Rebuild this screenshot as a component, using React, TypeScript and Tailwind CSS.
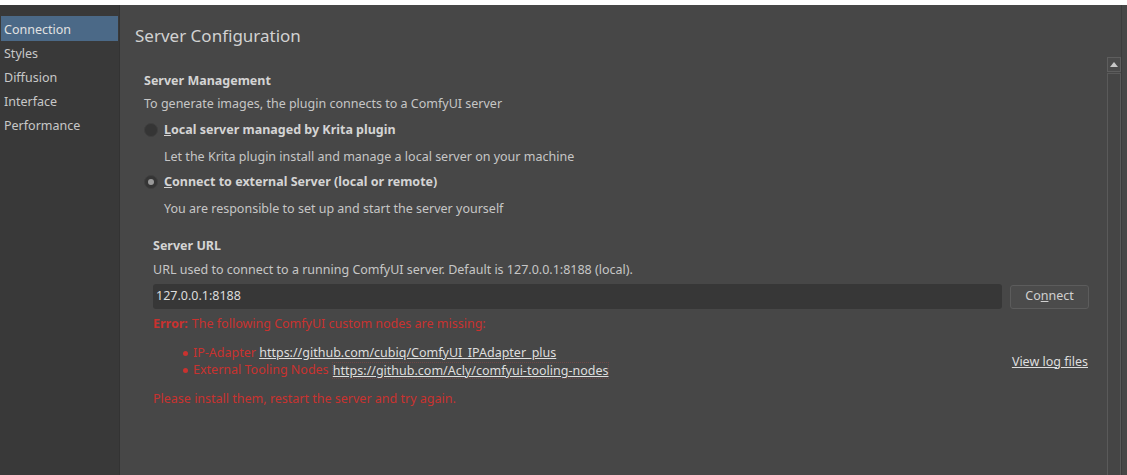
import React from "react";

const navItems = ["Connection", "Styles", "Diffusion", "Interface", "Performance"];

function Radio({ checked }: { checked: boolean }) {
  return (
    <span className="w-[14px] h-[14px] rounded-full bg-[#353535] border border-[#3f3f3f] flex items-center justify-center shrink-0">
      {checked && <span className="w-[6px] h-[6px] rounded-full bg-[#9a9a9a]" />}
    </span>
  );
}

function Bullet() {
  return <span className="w-[5px] h-[5px] rounded-full bg-[#c9322f] mr-[5px] shrink-0" />;
}

export default function App() {
  return (
    <div
      className="w-full h-[475px] flex flex-col bg-white overflow-hidden text-[12.5px] text-[#c6c6c6]"
      style={{ fontFamily: '"Noto Sans", "Open Sans", sans-serif' }}
    >
      <div className="h-[5px] bg-white shrink-0" />
      <div className="flex flex-1 min-h-0">
        {/* ---------------- SIDEBAR ---------------- */}
        <div className="w-[120px] shrink-0 bg-[#393939] pt-[11px] px-px border-r border-[#333]">
          {navItems.map((item, i) => (
            <div
              key={item}
              className={`flex items-center px-[3px] ${
                i === 0
                  ? "h-[25px] pt-[3px] bg-[#4b6987] text-[#e2e2e2]"
                  : "h-6 pt-[3px] text-[#c8c8c8]"
              }`}
            >
              {item}
            </div>
          ))}
        </div>

        {/* ---------------- MAIN ---------------- */}
        <div className="flex-1 flex bg-[#474747] min-w-0">
          <div className="flex-1 pl-[15px] pr-[18px] pt-[21px] min-w-0">
            <div className="h-5 flex items-center text-[17px] text-[#d2d2d2]">
              Server Configuration
            </div>

            <div className="pl-[9px]">
              <div className="mt-[25px] h-5 flex items-center font-bold text-[#d4d4d4]">
                Server Management
              </div>
              <div className="mt-[3px] h-5 flex items-center">
                To generate images, the plugin connects to a ComfyUI server
              </div>
              <div className="mt-[6px] h-5 flex items-center gap-[6px] font-bold text-[#d4d4d4]">
                <Radio checked={false} />
                <span>
                  <span className="underline">L</span>ocal server managed by Krita plugin
                </span>
              </div>
              <div className="mt-[7px] h-5 flex items-center pl-5">
                Let the Krita plugin install and manage a local server on your machine
              </div>
              <div className="mt-[5px] h-5 flex items-center gap-[6px] font-bold text-[#d4d4d4]">
                <Radio checked={true} />
                <span>
                  <span className="underline">C</span>onnect to external Server (local or remote)
                </span>
              </div>
              <div className="mt-[7px] h-5 flex items-center pl-5">
                You are responsible to set up and start the server yourself
              </div>

              <div className="pl-[9px]">
                <div className="mt-[17px] h-5 flex items-center font-bold text-[#d4d4d4]">
                  Server URL
                </div>
                <div className="mt-1 h-5 flex items-center">
                  URL used to connect to a running ComfyUI server. Default is 127.0.0.1:8188 (local).
                </div>
                <div className="mt-1 flex gap-2 items-center">
                  <div className="flex-1 h-[25px] bg-[#373737] rounded-[3px] flex items-center px-[3px] text-[#dcdcdc]">
                    127.0.0.1:8188
                  </div>
                  <button className="w-[79px] h-[24px] bg-[#4b4b4b] border border-[#5c5c5c] rounded-[3px] text-[#d0d0d0] flex items-center justify-center">
                    <span>
                      Co<span className="underline">n</span>nect
                    </span>
                  </button>
                </div>

                <div className="mt-[5px] h-5 flex items-center text-[#c9322f]">
                  <span className="font-bold mr-1">Error:</span>
                  The following ComfyUI custom nodes are missing:
                </div>

                <div className="mt-[11px] flex items-center justify-between">
                  <div className="pl-[30px]">
                    <div className="h-[17px] flex items-center text-[#c9322f]">
                      <Bullet />
                      IP-Adapter&nbsp;
                      <span className="text-[#dedede] underline">
                        https://github.com/cubiq/ComfyUI_IPAdapter_plus
                      </span>
                    </div>
                    <div className="h-[17px] flex items-center text-[#c9322f]">
                      <Bullet />
                      External Tooling Nodes&nbsp;
                      <span className="text-[#dedede] underline border border-dotted border-[#6e4646] leading-[15px]">
                        https://github.com/Acly/comfyui-tooling-nodes
                      </span>
                    </div>
                  </div>
                  <span className="text-[#dedede] underline mr-px">View log files</span>
                </div>

                <div className="mt-[10px] h-5 flex items-center text-[#c9322f]">
                  Please install them, restart the server and try again.
                </div>
              </div>
            </div>
          </div>

          {/* ---------------- SCROLLBAR ---------------- */}
          <div className="w-[14px] shrink-0 pt-[52px] flex flex-col">
            <div className="h-[15px] border border-[#5e5e5e] bg-[#4a4a4a] flex items-center justify-center">
              <svg width="8" height="5" viewBox="0 0 8 5">
                <path d="M4 0 L8 5 L0 5 Z" fill="#c8c8c8" />
              </svg>
            </div>
            <div className="flex-1 mt-px border-x border-t border-[#5a5a5a] bg-[#454545]" />
          </div>
          <div className="w-[6px] shrink-0 bg-[#474747] border-l border-[#3c3c3c]" />
        </div>
      </div>
    </div>
  );
}
